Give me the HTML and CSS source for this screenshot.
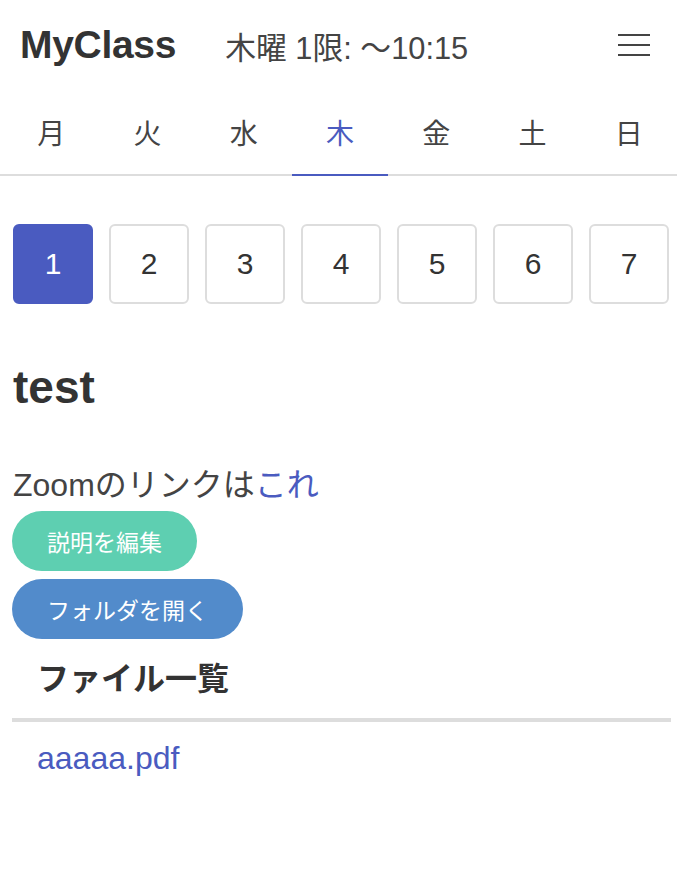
FILE: index.html
```html
<!DOCTYPE html>
<html lang="ja">
<head>
<meta charset="utf-8">
<title>MyClass</title>
<link rel="stylesheet" href="styles.css">
</head>
<body>
<header class="header">
  <div class="brand">MyClass</div>
  <div class="now">木曜 1限: 〜10:15</div>
  <button class="menu" aria-label="menu">
    <svg width="34" height="24" viewBox="0 0 34 24"><path d="M1 2H33M1 12H33M1 22H33" stroke="#444" stroke-width="2.2" fill="none"/></svg>
  </button>
</header>
<nav class="days">
  <div class="day">月</div>
  <div class="day">火</div>
  <div class="day">水</div>
  <div class="day active">木</div>
  <div class="day">金</div>
  <div class="day">土</div>
  <div class="day">日</div>
</nav>
<main class="main">
  <div class="periods">
    <div class="period active">1</div>
    <div class="period">2</div>
    <div class="period">3</div>
    <div class="period">4</div>
    <div class="period">5</div>
    <div class="period">6</div>
    <div class="period">7</div>
  </div>
  <h1 class="title">test</h1>
  <p class="desc">Zoomのリンクは<a class="link" href="#">これ</a></p>
  <div class="actions">
    <button class="pill pill-edit">説明を編集</button>
    <button class="pill pill-folder">フォルダを開く</button>
  </div>
  <h2 class="files-head">ファイル一覧</h2>
  <ul class="files">
    <li class="file"><a class="link" href="#">aaaaa.pdf</a></li>
  </ul>
</main>
</body>
</html>
```
FILE: styles.css
```css
* { box-sizing: border-box; }
body {
  margin: 0;
  font-family: "Liberation Sans", "Noto Sans CJK JP", sans-serif;
  color: #333;
  background: #fff;
}
.header {
  display: flex;
  align-items: center;
  height: 90px;
  padding: 0 26px 0 20px;
}
.brand {
  font-size: 39px;
  font-weight: bold;
  color: #333;
  letter-spacing: -0.3px;
}
.now {
  margin-left: 49px;
  font-size: 30.8px;
  color: #444;
}
.menu {
  margin-left: auto;
  background: none;
  border: 0;
  padding: 0;
  display: flex;
}
.days {
  display: flex;
  padding-left: 3px;
  border-bottom: 2px solid #ddd;
}
.day {
  flex: 1;
  height: 86px;
  display: flex;
  align-items: center;
  justify-content: center;
  font-size: 28px;
  color: #444;
  margin-bottom: -2px;
  border-bottom: 2px solid transparent;
}
.day.active {
  color: #4a5bc0;
  border-bottom-color: #4a5bc0;
}
.main {
  padding: 0 6px 0 12px;
}
.periods {
  display: flex;
  gap: 16px;
  margin-top: 48px;
  padding-left: 1px;
}
.period {
  width: 80px;
  height: 80px;
  border: 2px solid #ddd;
  border-radius: 6px;
  display: flex;
  align-items: center;
  justify-content: center;
  font-size: 30px;
  color: #333;
}
.period.active {
  background: #4a5bc0;
  border-color: #4a5bc0;
  color: #fff;
}
.title {
  margin: 60px 0 0 1px;
  font-size: 46px;
  line-height: 46px;
  font-weight: bold;
  color: #333;
}
.desc {
  margin: 57px 0 0 1px;
  font-size: 32px;
  line-height: 36px;
  color: #444;
}
.link {
  color: #4a5bc0;
  text-decoration: none;
}
.actions {
  display: flex;
  flex-direction: column;
  align-items: flex-start;
  gap: 8px;
  margin-top: 8px;
}
.pill {
  height: 60px;
  border: 0;
  border-radius: 30px;
  padding: 0 35px;
  font-family: inherit;
  font-size: 23px;
  color: #fff;
}
.pill-edit { background: #5ecfb1; }
.pill-folder { background: #528bcb; }
.files-head {
  margin: 18px 0 0 25px;
  font-size: 32px;
  line-height: 44px;
  font-weight: bold;
  color: #333;
}
.files {
  list-style: none;
  margin: 17px 0 0 0;
  padding: 0;
  border-top: 4px solid #ddd;
}
.file {
  padding: 16px 0 0 25px;
  font-size: 32px;
  line-height: 40px;
}
```
